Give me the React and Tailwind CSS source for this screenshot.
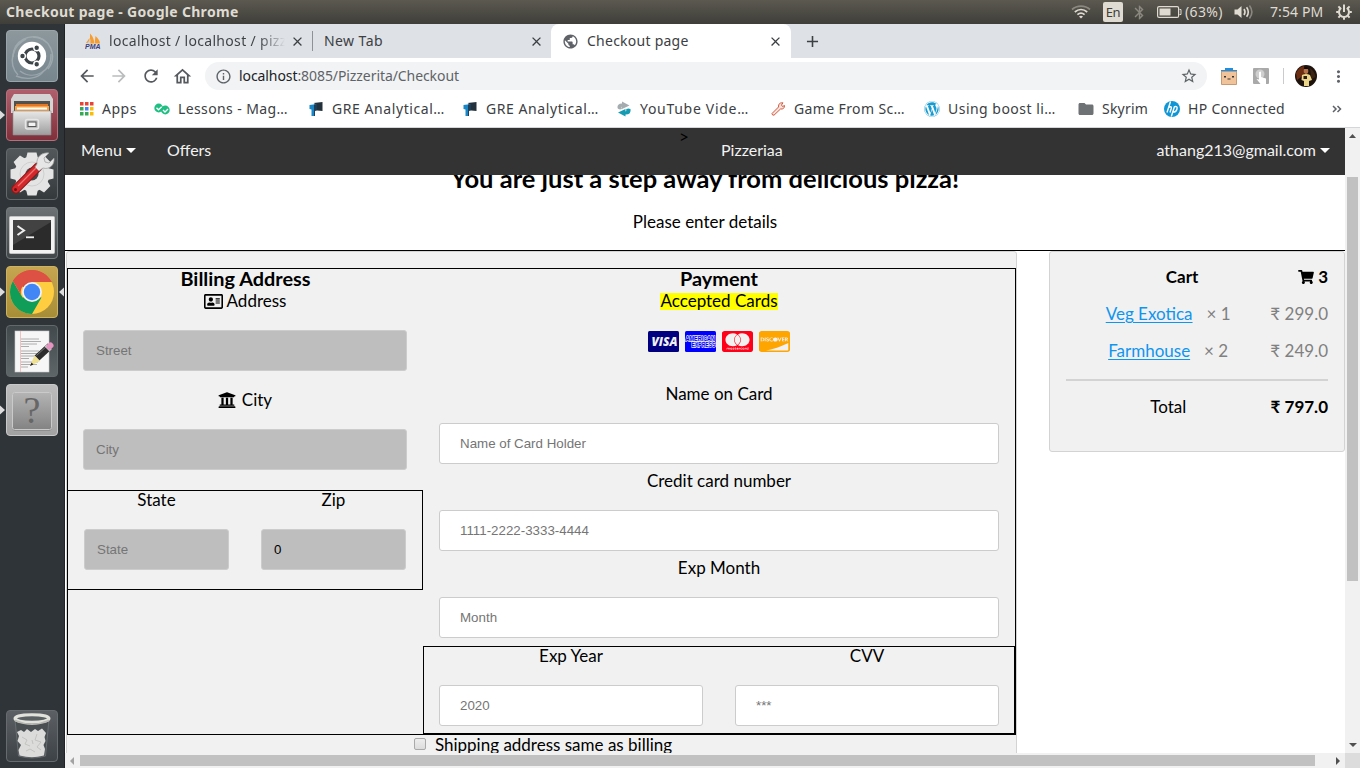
import { FaWordpress, FaCcMastercard, FaCcDiscover, FaRegAddressCard, FaUniversity, FaShoppingCart } from "react-icons/fa";
import { MdArrowBack, MdArrowForward, MdRefresh, MdOutlineHome, MdInfoOutline, MdStarBorder, MdMoreVert, MdClose, MdAdd, MdPublic, MdBluetooth, MdFolder } from "react-icons/md";

/* ---------- Desktop top bar ---------- */

function WifiIcon() {
  return (
    <svg width="20" height="14" viewBox="0 0 20 14" fill="none" strokeWidth="1.7">
      <path d="M1 4.5C6 0 14 0 19 4.5" stroke="#8b8880" />
      <path d="M3.8 7C7.5 3.8 12.5 3.8 16.2 7" stroke="#dfdbd2" />
      <path d="M6.4 9.6C8.5 7.8 11.5 7.8 13.6 9.6" stroke="#dfdbd2" />
      <path d="M8 11.5Q10 10 12 11.5L10 13.5Z" fill="#dfdbd2" />
    </svg>
  );
}

function BatteryIcon() {
  return (
    <svg width="25" height="12" viewBox="0 0 25 12">
      <rect x="0.6" y="0.6" width="21" height="10.8" rx="1.5" fill="none" stroke="#dfdbd2" strokeWidth="1.2" />
      <rect x="2.5" y="2.5" width="11" height="7" fill="#dfdbd2" />
      <path d="M22.5 3.5h1.5v5h-1.5" fill="none" stroke="#dfdbd2" />
    </svg>
  );
}

function VolumeIcon() {
  return (
    <svg width="20" height="16" viewBox="0 0 20 16" fill="none" strokeWidth="1.6">
      <path d="M0.5 5.5h3L7.5 2v12l-4-3.5h-3z" fill="#dfdbd2" />
      <path d="M10 5Q12 8 10 11" stroke="#dfdbd2" />
      <path d="M12.6 3.2Q16 8 12.6 12.8" stroke="#dfdbd2" />
      <path d="M15.4 1.5Q20.4 8 15.4 14.5" stroke="#8b8880" />
    </svg>
  );
}

function SessionIcon() {
  return (
    <svg width="16" height="16" viewBox="0 0 16 16" fill="none" stroke="#dfdbd2">
      <path d="M5.2 3.9A5 5 0 1 0 10.8 3.9" strokeWidth="2" />
      <path d="M8 0.5V8" strokeWidth="2" />
      <path d="M0.2 8h2.4M13.4 8h2.4M8 13.4v2.4M2.4 2.4l1.8 1.8M13.6 2.4l-1.8 1.8M2.4 13.6l1.8-1.8M13.6 13.6l-1.8-1.8" strokeWidth="2" />
    </svg>
  );
}

function SystemBar() {
  return (
    <div className="flex h-6 items-center bg-gradient-to-b from-[#5b5950] to-[#3f3e39] pr-2 pl-[6px] text-sm leading-6 text-[#dfdbd2]">
      <span className="flex-1 font-bold tracking-[0.31px]">Checkout page - Google Chrome</span>
      <WifiIcon />
      <span className="ml-3 flex h-5 w-5 items-center justify-center rounded-[2px] bg-[#dfdbd2] text-[13px] tracking-[-0.3px] text-[#3f3e39]">En</span>
      <MdBluetooth className="ml-2 text-[#8b8880]" size={17} />
      <span className="ml-[9px] flex"><BatteryIcon /></span>
      <span className="ml-[3px] w-[39px] tracking-[0.38px]">(63%)</span>
      <span className="ml-[10px] flex"><VolumeIcon /></span>
      <span className="ml-[16px] w-[54px] tracking-[0.1px]">7:54 PM</span>
      <span className="ml-[12px] flex"><SessionIcon /></span>
    </div>
  );
}

/* ---------- Launcher ---------- */

function Tile({ from, to, stroke, id, children }) {
  return (
    <svg width="52" height="52" viewBox="0 0 52 52" className="shrink-0">
      <defs>
        <linearGradient id={id} x1="0" y1="0" x2="0" y2="1">
          <stop offset="0" stopColor={from} />
          <stop offset="1" stopColor={to} />
        </linearGradient>
        <linearGradient id="metal" x1="0" y1="0" x2="0" y2="1">
          <stop offset="0" stopColor="#e8e8e8" />
          <stop offset="1" stopColor="#9d9d9d" />
        </linearGradient>
        <linearGradient id="plate" x1="0" y1="0" x2="0" y2="1">
          <stop offset="0" stopColor="#b4b4b4" />
          <stop offset="1" stopColor="#838383" />
        </linearGradient>
      </defs>
      <rect x="0.5" y="0.5" width="51" height="51" rx="3.5" fill={`url(#${id})`} stroke={stroke} />
      {children}
    </svg>
  );
}

function Ubuntu() {
  return (
    <Tile id="t1" from="#8d989d" to="#77858d" stroke="#9aa5aa">
      <g fill="none" stroke="#a9b4b9" strokeWidth="1.4" opacity="0.7">
        <path d="M7 27C7 10 25 2 38 10" />
        <path d="M27 7C44 7 52 26 42 39" />
        <path d="M12 45C1 33 7 15 20 9" />
        <path d="M45 24C46 42 27 51 14 41" />
        <path d="M37 42C31 49 20 50 10 46" />
      </g>
      <circle cx="26" cy="26" r="14.2" fill="#fff" />
      <circle cx="26" cy="26" r="7" fill="none" stroke="#3e4548" strokeWidth="3.2" />
      <g stroke="#fff" strokeWidth="1.4" fill="#3e4548">
        <circle cx="16.500" cy="26" r="2.9" />
        <circle cx="30.700" cy="17.8" r="2.9" />
        <circle cx="30.700" cy="34.2" r="2.9" />
      </g>
    </Tile>
  );
}

function Files() {
  return (
    <Tile id="t2" from="#b0606c" to="#7e2f3a" stroke="#b4717b">
      <path d="M8 5h36l3 5v14H5V10z" fill="#d4d4d4" />
      <rect x="8" y="12" width="36" height="12" fill="#54504c" />
      <path d="M10 15h32v8H10z" fill="#e6761f" />
      <path d="M9 17h34v6H9z" fill="#f7a249" />
      <path d="M11 18.5h30v2H11z" fill="#fff" />
      <path d="M7 22h38v24H7z" fill="url(#metal)" stroke="#8c8c8c" strokeWidth="0.6" />
      <rect x="19.5" y="30.500" width="13" height="9.500" rx="2" fill="#bdbdbd" stroke="#e6e6e6" strokeWidth="1.5" />
      <rect x="22" y="33" width="8" height="4.500" fill="#f3f3f3" stroke="#555" />
    </Tile>
  );
}

function Settings() {
  return (
    <Tile id="t3" from="#53595b" to="#34393b" stroke="#646a6c">
      <g fill="#e4e4e4">
        <circle cx="26" cy="26" r="17.500" />
        {[0, 45, 90, 135].map((a) => (
          <path key={a} d="M21.500 4.500h9l1.500 6H20zM21.500 47.500h9l1.500-6H20z" transform={`rotate(${a} 26 26)`} />
        ))}
      </g>
      <circle cx="26" cy="26" r="12" fill="none" stroke="#cfcfcf" />
      <circle cx="26" cy="26" r="6.500" fill="#44494b" />
      <path d="M10 41 32 19" stroke="#8e1616" strokeWidth="9" strokeLinecap="round" />
      <path d="M10 41 32 19" stroke="#d3282b" strokeWidth="7" strokeLinecap="round" />
      <path d="M12 38 31 19" stroke="#ee7270" strokeWidth="1.300" />
      <path d="M31 16C30 9 36 4 43 5l-5 5 1 4 4 1 5-5c1 7-5 12-11 10l-4 3-4-4z" fill="#e6e6e6" stroke="#999" strokeWidth="0.700" />
      <circle cx="9.500" cy="41.500" r="1.500" fill="#6e1010" />
    </Tile>
  );
}

function Terminal() {
  return (
    <Tile id="t4" from="#6d7375" to="#414648" stroke="#737a7c">
      <rect x="3.500" y="9.500" width="45" height="37" rx="1" fill="#f2f2f2" stroke="#c2c2c2" />
      <rect x="7" y="13" width="38" height="30" fill="#2b2b2b" />
      <path d="M7 13h38v2L7 38z" fill="#424242" />
      <path d="M11.500 19 18 23.500 11.500 28" fill="none" stroke="#eee" strokeWidth="2" />
      <path d="M20 30.300h8" stroke="#eee" strokeWidth="1.800" />
    </Tile>
  );
}

function Chrome() {
  return (
    <Tile id="t5" from="#c6a650" to="#a88d37" stroke="#ccb263">
      <circle cx="26" cy="26" r="22" fill="#ffcd40" />
      <path d="M26 26 6.950 15A22 22 0 0 1 45.050 15H26z" fill="#db4437" />
      <path d="M6.950 15A22 22 0 0 0 26 48L35.500 31.500H16.500z" fill="#0f9d58" />
      <path d="M6.950 15A22 22 0 0 1 45.050 15L46.500 16H26A10 10 0 0 0 16.500 31.500z" fill="#dd5144" />
      <circle cx="26" cy="26" r="10" fill="#f1f1f1" />
      <circle cx="26" cy="26" r="8.200" fill="#4285f4" />
    </Tile>
  );
}

function TextEditor() {
  return (
    <Tile id="t6" from="#42494c" to="#5f6668" stroke="#62696b">
      <rect x="9" y="6" width="34" height="41" fill="#f6f6f6" stroke="#ccc" strokeWidth="0.600" />
      <path d="M14.500 6v41" stroke="#f0b4b4" strokeWidth="0.800" />
      <path d="M15 14h18M15 16.500h20M15 19h16M15 21.500h8M15 26h18M15 28.500h20M15 31h17M15 33.500h8M15 37h17M15 39.500h16M15 42h7" stroke="#a5a5a5" strokeWidth="0.900" />
      <path d="M31 33 44 21" stroke="#2c2c2c" strokeWidth="7" />
      <path d="M30.500 30.500 42 20" stroke="#777" strokeWidth="1" />
      <path d="m24 41 4.500-10.500 5.500 5.500z" fill="#efe08f" />
      <path d="m24 41 1.500-3.500 2 2z" fill="#222" />
      <path d="m41 24 2.500-2.500" stroke="#c4c4c4" strokeWidth="7" />
      <path d="m43.500 21.500 1-1" stroke="#e593c0" strokeWidth="6" strokeLinecap="round" />
    </Tile>
  );
}

function Unknown() {
  return (
    <Tile id="t7" from="#bdbdbd" to="#a2a2a2" stroke="#c9c9c9">
      <rect x="6.500" y="8.500" width="39" height="38" rx="2" fill="#767676" />
      <rect x="6.500" y="8.500" width="39" height="37" rx="2" fill="url(#plate)" stroke="#cacaca" />
      <text x="26" y="39" textAnchor="middle" fontFamily="Liberation Serif, serif" fontSize="38" fill="#666">?</text>
    </Tile>
  );
}

function Trash() {
  return (
    <Tile id="t8" from="#5c6064" to="#3d4246" stroke="#666b70">
      <path d="M9 9 12.500 46Q26 50 39.500 46L43 9z" fill="#4a4f52" stroke="#73787b" strokeWidth="0.700" />
      <path d="M11 22 15 20 18 22 21 19 25 22 29 19 32 21 36 18.500 40 23 38.500 27 39.500 31 37.500 35 39 39 38 45.500Q26 49 13.500 45.500L12.500 40 15 35 11.500 31 13 26z" fill="#dcdcda" />
      <path d="m16 27 5 3-2 4 5 2M31 24l-2 6 6 2-4 5 4 3M26 30l1 4M20 41l4-2 5 3" stroke="#c0c0bd" fill="none" strokeWidth="0.900" />
      <ellipse cx="26" cy="8.500" rx="17" ry="3.700" fill="#5b6063" stroke="#e2e2dd" strokeWidth="3" />
      <path d="M9 10.500Q26 18 43 10.500" stroke="#b9b9b5" fill="none" strokeWidth="1.500" />
    </Tile>
  );
}

function Pip({ flip }) {
  return (
    <svg width="5" height="10" viewBox="0 0 5 10">
      <path d={flip ? "M5 0.500v9L0 5z" : "M0 0.500v9L5 5z"} fill="#dcdcdc" />
    </svg>
  );
}

function LauncherRow({ children, running, focused }) {
  return (
    <div className="flex h-[52px] items-center">
      <span className="w-[6px]">{running && <Pip />}</span>
      {children}
      <span className="flex w-[6px] justify-end">{focused && <Pip flip />}</span>
    </div>
  );
}

function Launcher() {
  return (
    <div className="flex w-[65px] shrink-0 flex-col gap-[7px] border-r border-[#1f2325] bg-[#2e3437] pt-[6px] pb-[6px]">
      <LauncherRow><Ubuntu /></LauncherRow>
      <LauncherRow running><Files /></LauncherRow>
      <LauncherRow><Settings /></LauncherRow>
      <LauncherRow><Terminal /></LauncherRow>
      <LauncherRow running focused><Chrome /></LauncherRow>
      <LauncherRow><TextEditor /></LauncherRow>
      <LauncherRow running><Unknown /></LauncherRow>
      <div className="flex-1" />
      <LauncherRow><Trash /></LauncherRow>
    </div>
  );
}

/* ---------- Browser chrome ---------- */

function PmaIcon() {
  return (
    <svg width="16" height="16" viewBox="0 0 16 16">
      <path d="M1 10 4.500 5v5zM5 10.500V0.500Q9.500 5 9 10.500zM9.500 10.500 10.500 3Q15 7 15 10.500z" fill="#f89c2e" />
      <path d="M2 10.500 5.500 6v4.500z" fill="#cfcfcf" />
      <text x="0" y="15.500" fontSize="6.500" fontWeight="700" fontStyle="italic" fontFamily="Liberation Sans, sans-serif" fill="#3d3d78" textLength="15.500" lengthAdjust="spacingAndGlyphs">PMA</text>
    </svg>
  );
}

function TabStrip() {
  return (
    <div className="flex h-[34px] items-center bg-[#dee1e6] text-[#3c4043]">
      <div className="flex h-full w-[247px] items-center pl-5">
        <PmaIcon />
        <span className="ml-2 w-[176px] overflow-hidden bg-gradient-to-r from-[#3c4043] from-85% to-[#dee1e6] bg-clip-text tracking-[0.32px] whitespace-nowrap text-transparent">localhost / localhost / pizz</span>
        <MdClose className="ml-[5px]" size={15} />
      </div>
      <div className="flex h-full w-[239px] items-center">
        <span className="h-5 w-px bg-[#8e9195]" />
        <span className="ml-[11px] flex-1 tracking-[0.43px]">New Tab</span>
        <MdClose className="mr-[7px]" size={15} />
      </div>
      <div className="flex h-full w-[240px] items-center rounded-t-lg bg-white pl-3">
        <MdPublic size={17} className="-ml-px text-[#5f6368]" />
        <span className="ml-2 flex-1 tracking-[0.25px]">Checkout page</span>
        <MdClose className="mr-2" size={15} />
      </div>
      <MdAdd className="ml-3" size={19} />
    </div>
  );
}

function Toolbar() {
  return (
    <div className="flex h-9 items-center bg-white pl-3 text-[#5f6368]">
      <MdArrowBack size={20} className="text-[#55595d]" />
      <MdArrowForward size={20} className="ml-3 text-[#babcbe]" />
      <MdRefresh size={20} className="ml-3 text-[#55595d]" />
      <MdOutlineHome size={21} className="ml-[11px] text-[#55595d]" />
      <div className="ml-3 flex h-7 w-[1002px] items-center rounded-full bg-[#f1f3f4] pr-[9px] pl-[10px]">
        <MdInfoOutline size={17} />
        <span className="ml-[7px] flex-1 tracking-[-0.08px]"><span className="text-[#202124]">localhost</span>:8085/Pizzerita/Checkout</span>
        <MdStarBorder size={18} />
      </div>
      <svg width="16" height="17" viewBox="0 0 16 17" className="ml-[14px]">
        <path d="M4 0h8v2h4v2H0V2h4z" fill="#1c8ee6" />
        <path d="M0.500 3.500h15v13H0.500z" fill="#f0c39a" stroke="#c69a72" />
        <path d="M3 8h2v1.500H3zM11 8h2v1.500h-2zM6.500 10.500h3v1h-3z" fill="#333" />
      </svg>
      <svg width="16" height="16" viewBox="0 0 16 16" className="ml-4">
        <rect width="16" height="16" rx="1" fill="#a9a9a9" />
        <circle cx="7" cy="6" r="4.500" fill="#cfcfcf" />
        <path d="M6 4q1.500-1 2 0v5l5 1.500V16H7.500L3.500 11l2.500 0.500z" fill="#fff" />
      </svg>
      <span className="ml-[14px] h-4 w-px bg-[#c9cbce]" />
      <svg width="22" height="22" viewBox="0 0 22 22" className="ml-[11px]">
        <circle cx="11" cy="11" r="11" fill="#1d120c" />
        <path d="M1 8Q4 2 9 1v9L2 15z" fill="#6b2e12" />
        <path d="M15 3q5 4 5.500 9l-4 2z" fill="#3c2415" />
        <ellipse cx="11" cy="6" rx="2.300" ry="2.900" fill="#b5744a" />
        <path d="M8.500 4Q11 0.500 13.500 4z" fill="#0c0806" />
        <path d="M7 10q4-2 8 0l2 5-3 1v5H9v-5l-2.500-1z" fill="#ead58b" />
        <path d="M8.500 11h3.500v3H8.500z" fill="#2b1c14" />
      </svg>
      <MdMoreVert size={19} className="ml-3" />
    </div>
  );
}

function AppsIcon() {
  const colors = ["#ea4335", "#ea4335", "#ea4335", "#34a853", "#4285f4", "#fbbc05", "#34a853", "#34a853", "#fbbc05"];
  return (
    <svg width="14" height="14" viewBox="0 0 14 14" className="ml-px">
      {colors.map((c, i) => <rect key={i} x={(i % 3) * 5} y={Math.floor(i / 3) * 5} width="3.500" height="3.500" fill={c} />)}
    </svg>
  );
}

function LessonsIcon() {
  return (
    <svg width="16" height="12" viewBox="0 0 16 12">
      <circle cx="4.700" cy="5" r="4.400" fill="#1fbf83" />
      <circle cx="11.300" cy="7" r="4.400" fill="#1fbf83" />
      <path d="m2.500 4.800 2 2 3.200-3M9 7l2 2 3-3" fill="none" stroke="#fff" strokeWidth="1.300" />
    </svg>
  );
}

function GreIcon() {
  return (
    <svg width="14" height="16" viewBox="0 0 14 16">
      <path d="M4.500 2 13.500 1V10L8 9.500V4z" fill="#23313d" />
      <path d="M0.500 4 8 3v5L6 9v6H2.500V8.500L0.500 8z" fill="#1a86c6" />
      <path d="M5 3.500 8 3v6.500L6 10v5H5z" fill="#1e3e58" />
    </svg>
  );
}

function SyncIcon() {
  return (
    <svg width="16" height="16" viewBox="0 0 16 16">
      <path d="M1.500 7Q1 2.500 6 2.500V0.500L13.500 4.500 6 8V5.500Q5 6 6 8L4 8.500Q2 8 1.500 7z" fill="#a5acaf" />
      <path d="M14.500 8Q15.500 13.500 9.500 13.500v2L2 11.500l7.500-3.500v2.500Q11 10.500 10 8.500L12 7.500z" fill="#159bb2" />
    </svg>
  );
}

function WrenchIcon() {
  return (
    <svg width="14" height="14" viewBox="0 0 14 14">
      <path d="M1 11.500 7.500 5Q7 2 9.500 1L12 0.800 10.500 3 11.500 4.500 13.500 3.500Q13.500 7.500 9.500 7L3 13.200Q1 13.500 1 11.500z" fill="#fde3dc" stroke="#cf5b41" strokeWidth="1" />
    </svg>
  );
}

function HpIcon() {
  return (
    <svg width="16" height="16" viewBox="0 0 16 16">
      <circle cx="8" cy="8" r="8" fill="#0f96d6" />
      <path d="M6.500 0.500 3 11.500M4.500 6.500Q8 4.500 7.200 7.500L6 11.500M10.500 5.500 7.300 15.500M10 5.800Q14 4.500 12.900 8.200Q12 11.400 8.800 11" fill="none" stroke="#fff" strokeWidth="1.400" />
    </svg>
  );
}

function Bookmark({ icon, className, children }) {
  return (
    <div className="flex w-[154px] shrink-0 items-center gap-2">
      <span className="flex w-4 justify-center">{icon}</span>
      <span className={className}>{children}</span>
    </div>
  );
}

function BookmarkBar() {
  return (
    <div className="flex h-[34px] items-center border-b border-[#d4d6d9] bg-white pr-[18px] pb-1 pl-[13px] whitespace-nowrap text-[#3c4043]">
      <div className="flex w-[76px] shrink-0 items-center gap-2">
        <span className="flex w-4 justify-center"><AppsIcon /></span>
        <span className="tracking-[0.5px]">Apps</span>
      </div>
      <Bookmark icon={<LessonsIcon />} className="tracking-[0.39px]">Lessons - Mag…</Bookmark>
      <Bookmark icon={<GreIcon />} className="tracking-[0.57px]">GRE Analytical…</Bookmark>
      <Bookmark icon={<GreIcon />} className="tracking-[0.57px]">GRE Analytical…</Bookmark>
      <Bookmark icon={<SyncIcon />} className="tracking-[0.7px]">YouTube Vide…</Bookmark>
      <Bookmark icon={<WrenchIcon />} className="tracking-[0.38px]">Game From Sc…</Bookmark>
      <Bookmark icon={<FaWordpress size={16} color="#179bd0" />} className="tracking-[0.48px]">Using boost li…</Bookmark>
      <div className="flex w-[86px] shrink-0 items-center gap-2">
        <span className="flex w-4 justify-center"><MdFolder className="shrink-0" size={18} color="#6e7275" /></span>
        <span className="tracking-[0.2px]">Skyrim</span>
      </div>
      <div className="flex flex-1 items-center gap-2">
        <HpIcon />
        <span className="tracking-[0.31px]">HP Connected</span>
      </div>
      <svg width="10" height="8" viewBox="0 0 10 8" fill="none" stroke="#5f6368" strokeWidth="1.500">
        <path d="m1 1 3 3-3 3M5.500 1l3 3-3 3" />
      </svg>
    </div>
  );
}

/* ---------- Checkout page ---------- */

function Caret() {
  return (
    <svg width="10" height="5" viewBox="0 0 10 5"><path d="M0 0h10L5 5z" fill="#fff" /></svg>
  );
}

function Nav() {
  return (
    <div className="relative flex h-[47px] bg-[#333] pr-[15px] pl-4 text-left text-base leading-[44px] text-[#f2f2f2]">
      <div className="flex h-11 w-[86px] items-center gap-1"><span>Menu</span><Caret /></div>
      <div className="w-[554px]">Offers</div>
      <div className="absolute top-0 left-[614px] text-[17px] leading-[18px] text-black">&gt;</div>
      <div className="flex-1">Pizzeriaa</div>
      <div className="flex h-11 items-center gap-1"><span>athang213@gmail.com</span><Caret /></div>
    </div>
  );
}

function Label({ children, tight }) {
  return tight
    ? <div className="h-[38px] leading-[17px]">{children}</div>
    : <div className="flex h-10 items-start justify-center gap-1 leading-[22px]">{children}</div>;
}

const baseInput = "block h-[41px] w-full rounded-[3px] border border-[#ccc] text-[13.33px] placeholder:text-[#757575] outline-none font-['Liberation_Sans',sans-serif]";

function GreyInput(props) {
  return <input {...props} className={`${baseInput} bg-[#bebebe] px-3`} />;
}

function WhiteInput(props) {
  return <input {...props} className={`${baseInput} bg-white px-5`} />;
}

function Billing() {
  return (
    <div className="w-[355px]">
      <h3 className="h-[21px] text-[19.89px] leading-[19px] font-bold">Billing Address</h3>
      <div className="pr-4 pl-[15px]">
        <Label><FaRegAddressCard className="mt-[3px] h-[17px] w-[19px]" />Address</Label>
        <GreyInput placeholder="Street" />
        <div className="h-[18px]" />
        <Label><FaUniversity className="mt-[2px] h-[18px] w-[18px]" /><span className="pl-[2px]">City</span></Label>
        <GreyInput placeholder="City" />
      </div>
      <div className="mt-5 -ml-px flex h-[100px] w-[356px] gap-8 border border-black px-4">
        <div className="flex-1"><Label tight>State</Label><GreyInput placeholder="State" /></div>
        <div className="flex-1"><Label tight>Zip</Label><GreyInput defaultValue="0" /></div>
      </div>
    </div>
  );
}

function VisaIcon() {
  return (
    <svg width="31" height="21" viewBox="0 0 31 21">
      <rect width="31" height="21" rx="1.500" fill="#000080" />
      <text x="3.500" y="15" textLength="26" lengthAdjust="spacingAndGlyphs" fontFamily="Open Sans, sans-serif" fontStyle="italic" fontWeight="800" fontSize="12.500" fill="#f1f1f1">VISA</text>
    </svg>
  );
}

function AmexIcon() {
  return (
    <svg width="31" height="21" viewBox="0 0 31 21">
      <rect width="31" height="21" rx="1.500" fill="#00f" />
      <g fontFamily="Liberation Sans, sans-serif" fontSize="7" fontWeight="700" fill="#00f" stroke="#f1f1f1" strokeWidth="1.300" paintOrder="stroke">
        <text x="0.500" y="9.500" textLength="29.500" lengthAdjust="spacingAndGlyphs">AMERICAN</text>
        <text x="6.500" y="16" textLength="24" lengthAdjust="spacingAndGlyphs">EXPRESS</text>
      </g>
    </svg>
  );
}

function Payment() {
  const card = "h-[21px] w-[31px]";
  return (
    <div className="w-[592px]">
      <h3 className="h-[21px] text-[19.89px] leading-[19px] font-bold">Payment</h3>
      <div className="flex h-[41px] items-start justify-center pt-[3px]">
        <mark className="bg-[#ff0] pb-[2px] leading-[15px] text-black">Accepted Cards</mark>
      </div>
      <div className="flex h-[52px] justify-center gap-[6px]">
        <VisaIcon />
        <AmexIcon />
        <FaCcMastercard className={card} viewBox="0 32 576 448" preserveAspectRatio="none" color="#ff0018" />
        <FaCcDiscover className={card} viewBox="0 32 576 448" preserveAspectRatio="none" color="#ffa500" />
      </div>
      <div className="px-4">
        <Label>Name on Card</Label>
        <WhiteInput placeholder="Name of Card Holder" />
        <div className="h-[6px]" />
        <Label>Credit card number</Label>
        <WhiteInput placeholder="1111-2222-3333-4444" />
        <div className="h-[6px]" />
        <Label>Exp Month</Label>
        <WhiteInput placeholder="Month" />
      </div>
      <div className="mt-2 flex h-[88px] gap-8 border border-black px-[15px]">
        <div className="flex-1"><Label tight>Exp Year</Label><WhiteInput placeholder="2020" /></div>
        <div className="flex-1"><Label tight>CVV</Label><WhiteInput placeholder="***" /></div>
      </div>
    </div>
  );
}

function CartRow({ name, qty, price }) {
  return (
    <div className="mb-[17px] flex h-5 leading-[22px] text-[#808080]">
      <div className="flex-1 text-center">
        <a className="mr-[14px] text-[#0e95f0] underline underline-offset-2">{name}</a>
        <span>× {qty}</span>
      </div>
      <span>₹ {price}</span>
    </div>
  );
}

function Cart() {
  return (
    <div className="ml-8 h-[201px] w-[296px] rounded-[3px] border border-[#d3d3d3] bg-[#f1f1f1] px-4 pt-[14px]">
      <div className="mb-[17px] flex h-5 leading-[22px] font-bold">
        <div className="flex-1 text-center">Cart</div>
        <span className="flex gap-1"><FaShoppingCart className="mt-[4px] h-[14px] w-4" />3</span>
      </div>
      <CartRow name="Veg Exotica" qty={1} price="299.0" />
      <CartRow name="Farmhouse" qty={2} price="249.0" />
      <div className="mt-[19px] h-[2px] bg-[#d3d3d3]" />
      <div className="mt-[15px] flex h-5 leading-[22px]">
        <div className="flex-1 text-center">Total</div>
        <span className="font-bold">₹ 797.0</span>
      </div>
    </div>
  );
}

function Page() {
  return (
    <div className="h-[625px] w-[1280px] overflow-hidden bg-white text-center font-[Lato,sans-serif] text-[17px] text-black">
      <Nav />
      <div className="h-[76px] overflow-hidden border-b border-black">
        <h2 className="-mt-3 text-[25.5px] leading-[30px] font-bold">You are just a step away from delicious pizza!</h2>
        <p className="mt-[18px] leading-[22px]">Please enter details</p>
      </div>
      <div className="flex">
        <div className="ml-px h-[520px] w-[951px] rounded-[3px] border border-[#d3d3d3] bg-[#f1f1f1] pt-4">
          <div className="flex h-[467px] w-[949px] border border-black">
            <Billing />
            <Payment />
          </div>
          <div className="flex items-start justify-center gap-[9px] pl-[3px] leading-5">
            <span className="mt-[3px] h-3 w-3 rounded-[2px] border border-[#a9a9a9] bg-gradient-to-b from-[#ededed] to-[#dcdcdc]" />
            <span className="w-[238px]">Shipping address same as billing</span>
          </div>
        </div>
        <Cart />
      </div>
    </div>
  );
}

function VerticalScrollbar() {
  return (
    <div className="flex w-[15px] flex-col items-center bg-[#f1f1f1] pt-[6px]">
      <svg width="7" height="4" viewBox="0 0 7 4"><path d="M0 4h7L3.500 0z" fill="#505050" /></svg>
      <div className="mt-[39px] h-[404px] w-[11px] bg-[#c1c1c1]" />
      <div className="flex-1" />
      <svg width="8" height="4" viewBox="0 0 8 4" className="mb-[6px]"><path d="M0 0h8L4 4z" fill="#505050" /></svg>
    </div>
  );
}

function HorizontalScrollbar() {
  return (
    <div className="flex h-[15px] items-center bg-[#f1f1f1] pl-[5px]">
      <svg width="4" height="8" viewBox="0 0 4 8"><path d="M4 0v8L0 4z" fill="#a3a3a3" /></svg>
      <div className="ml-[6px] h-[11px] w-[1235px] bg-[#c1c1c1]" />
      <svg width="4" height="8" viewBox="0 0 4 8" className="ml-[21px]"><path d="M0 0v8L4 4z" fill="#505050" /></svg>
      <div className="ml-auto h-full w-[15px] bg-[#dcdcdc]" />
    </div>
  );
}

export default function App() {
  return (
    <div className="flex h-[768px] w-[1360px] flex-col overflow-hidden font-['Noto_Sans',sans-serif]">
      <SystemBar />
      <div className="flex h-[744px]">
        <Launcher />
        <div className="w-[1295px] text-sm leading-5">
          <TabStrip />
          <Toolbar />
          <BookmarkBar />
          <div className="flex h-[625px]">
            <Page />
            <VerticalScrollbar />
          </div>
          <HorizontalScrollbar />
        </div>
      </div>
    </div>
  );
}
